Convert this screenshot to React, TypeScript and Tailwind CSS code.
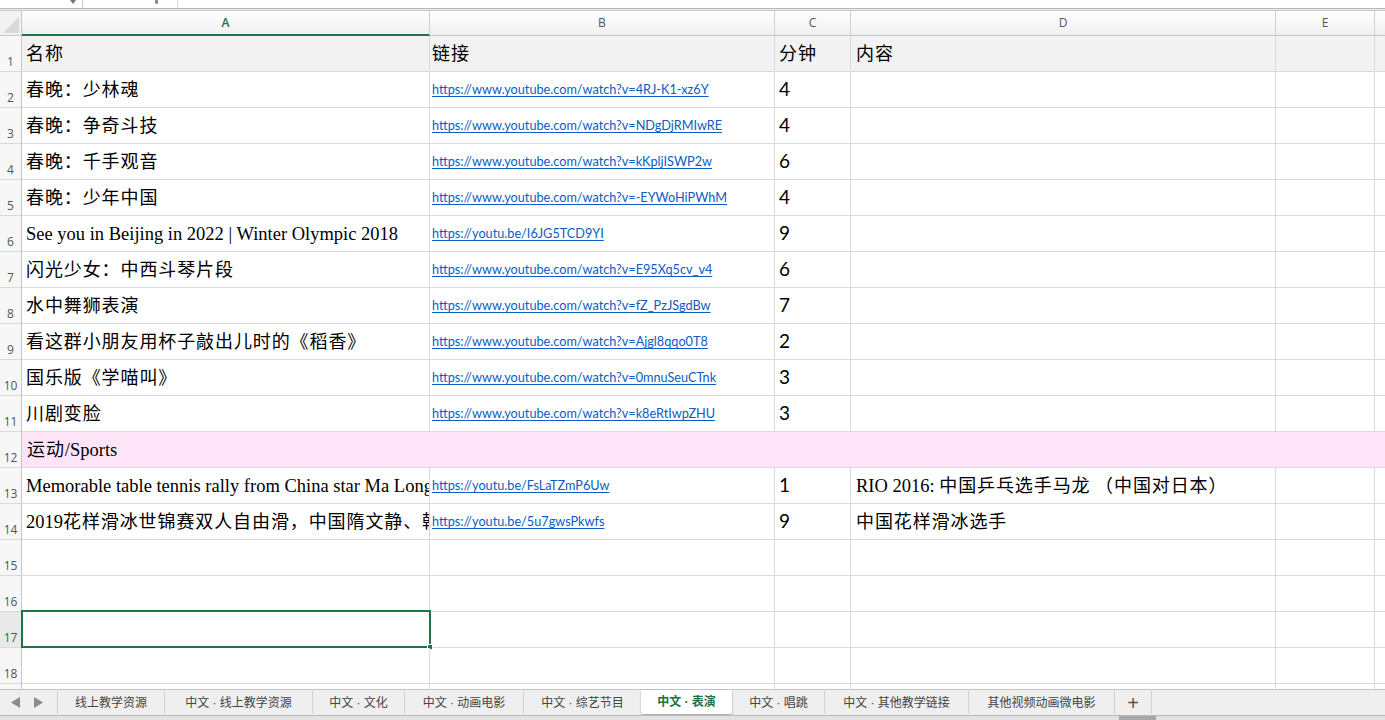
import React from "react";

type RowData = {
  a?: string;
  b?: string;
  c?: string;
  d?: string;
  pink?: boolean;
  head?: boolean;
};

const rows: RowData[] = [
  { a: "名称", b: "链接", c: "分钟", d: "内容", head: true },
  { a: "春晚：少林魂", b: "https://www.youtube.com/watch?v=4RJ-K1-xz6Y", c: "4" },
  { a: "春晚：争奇斗技", b: "https://www.youtube.com/watch?v=NDgDjRMIwRE", c: "4" },
  { a: "春晚：千手观音", b: "https://www.youtube.com/watch?v=kKpljISWP2w", c: "6" },
  { a: "春晚：少年中国", b: "https://www.youtube.com/watch?v=-EYWoHiPWhM", c: "4" },
  { a: "See you in Beijing in 2022 | Winter Olympic 2018", b: "https://youtu.be/I6JG5TCD9YI", c: "9" },
  { a: "闪光少女：中西斗琴片段", b: "https://www.youtube.com/watch?v=E95Xq5cv_v4", c: "6" },
  { a: "水中舞狮表演", b: "https://www.youtube.com/watch?v=fZ_PzJSgdBw", c: "7" },
  { a: "看这群小朋友用杯子敲出儿时的《稻香》", b: "https://www.youtube.com/watch?v=Ajgl8qqo0T8", c: "2" },
  { a: "国乐版《学喵叫》", b: "https://www.youtube.com/watch?v=0mnuSeuCTnk", c: "3" },
  { a: "川剧变脸", b: "https://www.youtube.com/watch?v=k8eRtIwpZHU", c: "3" },
  { a: "运动/Sports", pink: true },
  {
    a: "Memorable table tennis rally from China star Ma Long",
    b: "https://youtu.be/FsLaTZmP6Uw",
    c: "1",
    d: "RIO 2016: 中国乒乓选手马龙 （中国对日本）",
  },
  {
    a: "2019花样滑冰世锦赛双人自由滑，中国隋文静、韩聪夺冠",
    b: "https://youtu.be/5u7gwsPkwfs",
    c: "9",
    d: "中国花样滑冰选手",
  },
  {},
  {},
  {},
  {},
  {},
];

const tabs = [
  { label: "线上教学资源", w: "w-[107px]" },
  { label: "中文 · 线上教学资源", w: "w-[148px]" },
  { label: "中文 · 文化", w: "w-[92px]" },
  { label: "中文 · 动画电影", w: "w-[119px]" },
  { label: "中文 · 综艺节目", w: "w-[118px]" },
  { label: "中文 · 表演", w: "w-[91px]", active: true },
  { label: "中文 · 唱跳", w: "w-[92px]" },
  { label: "中文 · 其他教学链接", w: "w-[144px]" },
  { label: "其他视频动画微电影", w: "w-[146px]" },
];

const gridCols = "grid grid-cols-[22px_408px_345px_76px_425px_99px_1fr]";
const cellText = "font-['Liberation_Serif','Noto_Sans_CJK_SC',serif] text-[18.5px] text-black pt-[3px]";
const line = "border-[#d9d9d9]";

// chinese runs get a touch of extra spacing, like the kai font in the sheet
function Txt({ s }: { s?: string }) {
  if (!s) return null;
  const parts = s.split(/([\u3000-\u9fff\uff00-\uffef《》]+)/);
  return (
    <span className="whitespace-pre">
      {parts.map((p, i) =>
        i % 2 === 1 ? (
          <span key={i} className="tracking-[0.9px] text-[18px]">
            {p}
          </span>
        ) : (
          <span key={i}>{p}</span>
        )
      )}
    </span>
  );
}

function Row({ r, n }: { r: RowData; n: number }) {
  const selected = n === 17;
  const bg = r.pink ? "bg-[#fde4f7]" : r.head ? "bg-[#f2f2f2]" : "bg-white";
  return (
    <div className={`${gridCols} h-[36px] shrink-0`}>
      <div
        className={`flex items-end justify-center pb-[1px] leading-[16px] border-r border-b border-r-[#c6c6c6] ${line} font-['Open_Sans',sans-serif] text-[12px] ${
          selected ? "bg-[#e9e9e9] text-[#217346]" : "bg-[#f7f7f7] text-[#555]"
        }`}
      >
        {n}
      </div>
      {r.pink ? (
        <div className={`col-span-6 flex items-center pl-[5px] border-b ${line} ${bg} ${cellText}`}>
          <Txt s={r.a} />
        </div>
      ) : (
        <>
          <div className={`relative flex items-center pl-[4px] border-r border-b ${line} ${bg} ${cellText}`}>
            <div className="overflow-hidden whitespace-nowrap w-full">
              <Txt s={r.a} />
            </div>
            {selected && (
              <div className="absolute -top-[2px] -left-[1px] -right-[2px] -bottom-[1px] border-2 border-[#217346]">
                <div className="absolute -right-[4px] -bottom-[4px] w-[6px] h-[6px] bg-[#217346] border border-white" />
              </div>
            )}
          </div>
          <div className={`flex items-center pl-[2px] border-r border-b ${line} ${bg} overflow-hidden whitespace-nowrap`}>
            {r.head ? (
              <span className={cellText}>
                <Txt s={r.b} />
              </span>
            ) : (
              <span className="font-['Lato',sans-serif] text-[12.7px] text-[#0b5cc4] underline underline-offset-[2px]">
                {r.b}
              </span>
            )}
          </div>
          <div
            className={`flex items-center pl-[4px] border-r border-b ${line} ${bg} ${
              r.head ? cellText : "font-['Lato',sans-serif] text-[19px] text-black"
            }`}
          >
            <Txt s={r.c} />
          </div>
          <div className={`flex items-center pl-[5px] border-r border-b ${line} ${bg} ${cellText} whitespace-nowrap`}>
            <Txt s={r.d} />
          </div>
          <div className={`border-r border-b ${line} ${bg}`} />
          <div className={`border-b ${line} ${bg}`} />
        </>
      )}
    </div>
  );
}

export default function App() {
  const headers = ["A", "B", "C", "D", "E", ""];
  return (
    <div className="w-[1385px] h-[720px] flex flex-col overflow-hidden bg-white select-none">
      {/* formula bar remnant */}
      <div className="h-[8px] shrink-0 flex items-end relative">
        <svg className="absolute left-[69px] top-[0px]" width="8" height="5" viewBox="0 0 8 5">
          <polygon points="1,0 7,0 4,4" fill="#777" />
        </svg>
        <div className="absolute left-[82px] top-0 h-[8px] w-px bg-[#c8c8c8]" />
        <div className="absolute left-[155px] top-0 h-[4px] w-[3px] bg-[#888] rounded-b-sm" />
        <div className="absolute left-[177px] top-0 h-[8px] w-px bg-[#dcdcdc]" />
      </div>
      <div className="h-px bg-[#b8b8b8] shrink-0" />
      <div className="h-px bg-[#ececec] shrink-0" />

      {/* column headers */}
      <div className={`${gridCols} h-[26px] shrink-0 border-t border-[#c9c9c9]`}>
        <div className="relative bg-[#f2f2f2] border-r border-b border-[#c6c6c6]">
          <svg className="absolute right-[2px] bottom-[2px]" width="16" height="16" viewBox="0 0 16 16">
            <polygon points="16,0 16,16 0,16" fill="#dadada" />
          </svg>
        </div>
        {headers.map((h, i) => (
          <div
            key={i}
            className={`flex items-center justify-center bg-gradient-to-b from-white to-[#f0f0f0] font-['Open_Sans',sans-serif] text-[12px] ${
              i < 5 ? "border-r border-[#d0d0d0]" : ""
            } ${
              h === "A"
                ? "border-b-2 border-b-[#217346] text-[#217346] font-semibold"
                : "border-b border-b-[#c6c6c6] text-[#555]"
            }`}
          >
            {h}
          </div>
        ))}
      </div>

      {/* grid */}
      <div className="flex-1 overflow-hidden flex flex-col">
        {rows.map((r, i) => (
          <Row key={i} r={r} n={i + 1} />
        ))}
      </div>

      {/* sheet tabs */}
      <div className="h-[26px] shrink-0 flex bg-[#efefef] border-t border-[#c4c4c4] font-['Liberation_Sans','Noto_Sans_CJK_SC',sans-serif] text-[12px] text-[#444]">
        <div className="w-[57px] flex items-center gap-[14px] pl-[11px]">
          <svg width="9" height="11" viewBox="0 0 9 11">
            <polygon points="9,0 9,11 0,5.5" fill="#8c8c8c" />
          </svg>
          <svg width="9" height="11" viewBox="0 0 9 11">
            <polygon points="0,0 0,11 9,5.5" fill="#8c8c8c" />
          </svg>
        </div>
        {tabs.map((t) =>
          t.active ? (
            <div
              key={t.label}
              className={`${t.w} h-[24px] flex items-center justify-center bg-white text-[#217346] font-bold shadow-[0_1px_2px_rgba(0,0,0,0.35)] rounded-b-[2px]`}
            >
              {t.label}
            </div>
          ) : (
            <div key={t.label} className={`${t.w} flex items-center justify-center border-l border-[#cfcfcf] my-[1px]`}>
              {t.label}
            </div>
          )
        )}
        <div className="w-[38px] flex items-center justify-center border-l border-r border-[#cfcfcf] my-[1px] text-[20px] text-[#555]">
          +
        </div>
      </div>
      <div className="h-[5px] shrink-0 bg-[#e2e2e2] border-t border-[#b9b9b9] relative">
        <div className="absolute left-[1119px] top-0 w-[37px] h-[4px] bg-[#a9a9a9]" />
      </div>
    </div>
  );
}
